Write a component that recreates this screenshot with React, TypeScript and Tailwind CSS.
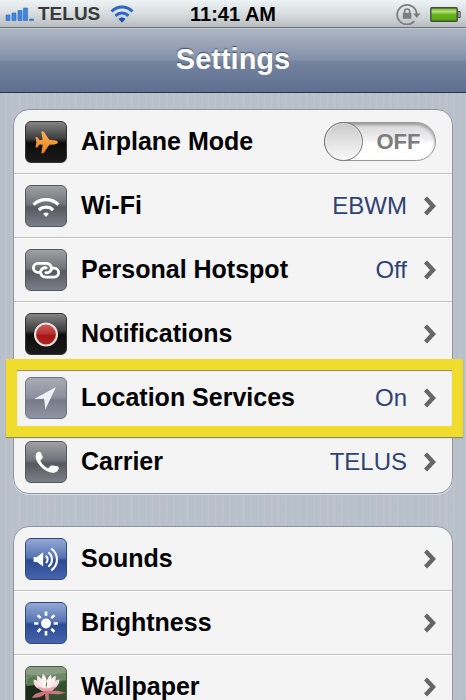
import { useState, type ReactNode } from "react";

const tones = {
  black: "bg-[linear-gradient(#858585_0%,#3c3c3c_42%,#0c0c0c_52%,#1a1a1a_100%)] border-[#333]",
  grey: "bg-[linear-gradient(#a0a1a4_0%,#73757b_44%,#565960_54%,#7b7f88_100%)] border-[#55585f]",
  silver: "bg-[linear-gradient(#a9abb4_0%,#8d909d_48%,#777b8a_56%,#8f93a2_100%)] border-[#70737f]",
  blue: "bg-[linear-gradient(#94a8d4_0%,#5674b4_46%,#2c4b95_54%,#4564ac_100%)] border-[#34477c]",
  photo: "bg-[#45633f] border-[#4d5a4c]",
};

function Plane() {
  return (
    <svg viewBox="0 0 42 42" className="size-full" aria-hidden="true">
      <defs>
        <linearGradient id="plane" x1="0" y1="0" x2="0" y2="1">
          <stop offset="0" stopColor="#f8b15c" />
          <stop offset="1" stopColor="#ee8118" />
        </linearGradient>
      </defs>
      <path
        fill="url(#plane)"
        d="M33.500 21.300c0 1.200-1.500 2-3.600 2.200l-5.400.5-5.700 8.200c-.6.9-2.800.9-2.600-.3l1.300-8-3.300-.3-2 2.600c-.6.8-2.300.8-2.100-.3l.8-4.600-.8-4.600c-.2-1.100 1.500-1.100 2.100-.3l2 2.600 3.300-.3-1.300-8c-.2-1.200 2-1.200 2.600-.3l5.700 8.200 5.400.5c2.100.2 3.600 1 3.600 2.200z"
      />
    </svg>
  );
}

function WifiGlyph() {
  return (
    <svg viewBox="0 0 42 42" className="size-full" fill="none" stroke="#fff" strokeWidth="3.400" aria-hidden="true">
      <path d="M8 19.500c7.200-7 18.800-7 26 0M13.500 25.300c4.300-4 10.700-4 15 0" />
      <path d="M18 29.200c1.700-1.700 4.300-1.700 6 0l-3 3.300z" fill="#fff" stroke="none" />
    </svg>
  );
}

function Links() {
  return (
    <svg viewBox="0 0 42 42" className="size-full" fill="none" stroke="#fff" strokeWidth="3" strokeLinecap="round" aria-hidden="true">
      <path d="M15 23.500h-2.500a4.700 4.700 0 0 1 0-9.500H21c5.500 0 7.500 6 3.800 9-1.200.9-2.600 1-4 .8" />
      <path d="M27 19h2.500a4.700 4.700 0 0 1 0 9.500H21c-5.500 0-7.500-6-3.800-9 1.200-.9 2.600-1 4-.8" />
    </svg>
  );
}

function RedDot() {
  return (
    <svg viewBox="0 0 42 42" className="size-full" aria-hidden="true">
      <defs>
        <linearGradient id="dot" x1="0" y1="0" x2="0" y2="1">
          <stop offset="0" stopColor="#cf5a58" />
          <stop offset=".45" stopColor="#b83433" />
          <stop offset=".55" stopColor="#a31615" />
          <stop offset="1" stopColor="#b02423" />
        </linearGradient>
      </defs>
      <circle cx="21" cy="21.500" r="11.500" fill="url(#dot)" stroke="#e4e0de" strokeWidth="2.200" />
    </svg>
  );
}

function Arrow() {
  return (
    <svg viewBox="0 0 42 42" className="size-full" aria-hidden="true">
      <path d="M31.500 9.500 20.300 33l-1.300-11.300L8.500 22z" fill="#eef1f6" />
    </svg>
  );
}

function Handset() {
  return (
    <svg viewBox="0 0 42 42" className="size-full" aria-hidden="true">
      <path
        fill="#fff"
        d="M12 10.800c1.400-.9 2.900-.9 3.500.2l1.900 4.200c.5 1.300-.2 2.300-1.700 3.300-.8.600-.6 1.500.4 3.100 1.400 2.200 3.200 3.900 5.300 5.100 1.500.9 2.500.9 3.200-.2.800-1.400 2-2.100 3.200-1.700l5 .7c1.600.2 1.900 1.500 1.400 2.900-.9 2.800-3.200 4.200-6.500 4-3.900-.3-8.600-2.700-12.300-6.700-3.500-3.800-5.200-7.700-5.300-10.500 0-1.900.6-3.500 1.900-4.400z"
      />
    </svg>
  );
}

function Speaker() {
  return (
    <svg viewBox="0 0 42 42" className="size-full" fill="none" stroke="#fff" strokeWidth="2.200" aria-hidden="true">
      <path d="M8 18.800h3.500l6.500-4.800v15l-6.500-4.800H8z" fill="#fff" stroke="none" />
      <path d="M20.800 17.800c2.600 2 2.600 5.400 0 7.400M23.500 14c5 3.800 5 11.200 0 15M26.500 10c8 6 8 17 0 23" />
    </svg>
  );
}

function Sun() {
  return (
    <svg viewBox="0 0 42 42" className="size-full" stroke="#fff" strokeWidth="2.800" aria-hidden="true">
      <circle cx="21" cy="21.500" r="5.200" fill="#fff" stroke="none" />
      <path d="M21 9v4.500M21 29.500V34M8.500 21.500H13M29 21.500h4.500M12.200 12.700l3.200 3.200M26.600 27.100l3.200 3.200M29.800 12.700l-3.200 3.200M15.400 27.100l-3.200 3.200" />
    </svg>
  );
}

function Lotus() {
  return (
    <svg viewBox="0 0 42 42" className="size-full" aria-hidden="true">
      <path d="M0 0h42v14L0 18z" fill="#6f8a68" />
      <path d="M0 0h42v6L20 9 0 8z" fill="#8a9c84" />
      <path d="M0 20 14 15l12 10-6 17H0z" fill="#1c2a1a" />
      <path d="M26 22l16-8v28H22z" fill="#34512f" />
      <path d="M2 12c6-3 10-2 14 2l-6 5-9 1z" fill="#587c4d" />
      <g fill="#f6dcdc">
        <path d="M21 24C7 24 8 15 8 13c6 1 11 5 13 11zM21 24c14 0 14-9 14-11-6 1-12 5-14 11z" />
        <path d="M21 24c-9-3-10-10-9-15 5 3 9 9 9 15zM21 24c9-3 11-10 10-15-5 3-10 9-10 15z" fill="#fbeceb" />
        <path d="M21 24c-6-5-5-12-3-17 4 4 5 11 3 17zM21 24c5-5 7-11 5-16-4 4-6 10-5 16z" fill="#fff6f2" />
      </g>
      <path d="M12 20c5 3 14 3 19 0-2 6-5 6-9 6s-8-1-10-6z" fill="#e5a8ae" />
      <path d="M20 25l-10 3-4 4c6 1 11-1 14-4l1 14h3V28l10 1 8-2-9-2z" fill="#c8747f" />
    </svg>
  );
}

function Chevron() {
  return (
    <svg viewBox="0 0 12 20" className="ml-[17px] h-5 w-3 shrink-0" fill="none" stroke="#666" strokeWidth="4.400" aria-hidden="true">
      <path d="M1.500 2 9 10l-7.500 8" />
    </svg>
  );
}

type Item = {
  label: string;
  value?: string;
  tone: keyof typeof tones;
  icon: ReactNode;
  highlighted?: boolean;
};

const network: Item[] = [
  { label: "Wi-Fi", value: "EBWM", tone: "grey", icon: <WifiGlyph /> },
  { label: "Personal Hotspot", value: "Off", tone: "grey", icon: <Links /> },
  { label: "Notifications", tone: "black", icon: <RedDot /> },
  { label: "Location Services", value: "On", tone: "silver", icon: <Arrow />, highlighted: true },
  { label: "Carrier", value: "TELUS", tone: "grey", icon: <Handset /> },
];

const device: Item[] = [
  { label: "Sounds", tone: "blue", icon: <Speaker /> },
  { label: "Brightness", tone: "blue", icon: <Sun /> },
  { label: "Wallpaper", tone: "photo", icon: <Lotus /> },
];

function Tile({ tone, children }: { tone: keyof typeof tones; children: ReactNode }) {
  return (
    <span className={`mr-[14px] block size-[42px] shrink-0 overflow-hidden rounded-md border ${tones[tone]}`}>
      {children}
    </span>
  );
}

function Card({ children }: { children: ReactNode }) {
  return (
    <ul className="mx-[13px] rounded-2xl border border-[#8f959e] bg-[#f4f4f4] shadow-[0_1px_0_#d9dde3]">{children}</ul>
  );
}

const rowLine = "relative border-b border-[#bfbfbf] shadow-[0_1px_0_#fff] last:border-b-0 last:shadow-none";
const rowBody = "flex h-[63px] w-full items-center pr-4 pl-[11px] text-left";

function Row({ item }: { item: Item }) {
  return (
    <li className={rowLine}>
      <button type="button" className={rowBody}>
        <Tile tone={item.tone}>{item.icon}</Tile>
        <span className="flex-1 text-[25px] font-bold">{item.label}</span>
        {item.value && <span className="text-[#2f4273]">{item.value}</span>}
        <Chevron />
      </button>
      {item.highlighted && (
        <span className="pointer-events-none absolute -top-[7px] -right-[11px] -bottom-[8px] -left-[8px] z-10 border-[11px] border-[#f0dc2c] shadow-[0_1px_1px_#8a8a70,inset_0_1px_1px_#8a8a70]" />
      )}
    </li>
  );
}

function AirplaneRow() {
  const [on, setOn] = useState(false);
  return (
    <li className={rowLine}>
      <div className={rowBody}>
        <Tile tone="black">
          <Plane />
        </Tile>
        <label htmlFor="airplane" className="flex-1 text-[25px] font-bold">
          Airplane Mode
        </label>
        <span
          className={`flex h-[39px] w-28 items-center rounded-full border border-[#999] bg-[linear-gradient(#d6d6d6,#f0f0f0_45%,#fff_55%,#fff)] shadow-[inset_0_2px_3px_#999] ${on ? "flex-row-reverse" : ""}`}
        >
          <input
            id="airplane"
            type="checkbox"
            role="switch"
            checked={on}
            onChange={() => setOn(!on)}
            className="-m-px size-[39px] shrink-0 appearance-none rounded-full border border-[#777] bg-[linear-gradient(#c9c9c9,#fafafa)] shadow-[inset_0_0_2px_#fff]"
          />
          <span className="flex-1 text-center text-[22px] font-bold text-[#7c7c7c]">{on ? "ON" : "OFF"}</span>
        </span>
      </div>
    </li>
  );
}

function StatusBar() {
  return (
    <div className="grid h-7 shrink-0 grid-cols-[1fr_auto_1fr] items-center border-b border-[#6d7178] bg-[linear-gradient(#eef3f5,#d8dddf_50%,#b9bdbf)] px-[5px] text-xl font-bold">
      <div className="flex items-center text-[19px] text-[#3a3a3a]">
        <svg viewBox="0 0 29 14" className="mr-1 h-[14px] w-[29px]" fill="#3f86dd" stroke="#2a68be" strokeWidth=".6" aria-hidden="true">
          <path d="M1 8h4v5.500H1zM7 6h4v7.500H7zM13 3.500h4v10h-4zM18.500 1h4v12.500h-4zM24.500 12h4v1.500h-4z" />
        </svg>
        <span>TELUS</span>
        <svg viewBox="0 0 24 18" className="ml-[10px] h-[18px] w-6" fill="none" stroke="#2c66c6" strokeWidth="3" aria-hidden="true">
          <path d="M1.500 6.500c6-6 15-6 21 0M5.500 10.800c3.800-3.600 9.200-3.600 13 0" />
          <path d="M8.500 14c2-2 5-2 7 0L12 17.800z" fill="#1c52b8" stroke="none" />
        </svg>
      </div>
      <time className="text-black">11:41 AM</time>
      <div className="flex items-center justify-end">
        <svg viewBox="0 0 25 22" className="mr-[9px] h-[22px] w-[25px]" fill="none" stroke="#7c7f82" strokeWidth="1.800" aria-hidden="true">
          <path d="M18.300 18.200A9.800 9.800 0 1 1 20.800 11.500" />
          <path d="M17 10.500h7.500l-3.700 4.500z" fill="#7c7f82" stroke="none" />
          <path d="M6.800 9.800h8.600v6H6.800z" fill="#7c7f82" stroke="none" />
          <path d="M8.500 10V8.500c0-3.300 5.200-3.300 5.200 0V10" strokeWidth="1.600" />
        </svg>
        <svg viewBox="0 0 31 15" className="h-[15px] w-[31px]" aria-hidden="true">
          <defs>
            <linearGradient id="charge" x1="0" y1="0" x2="0" y2="1">
              <stop offset="0" stopColor="#6fae2c" />
              <stop offset=".3" stopColor="#b6e07a" />
              <stop offset=".5" stopColor="#66b41c" />
              <stop offset="1" stopColor="#5aa510" />
            </linearGradient>
          </defs>
          <rect x=".8" y=".8" width="26.400" height="13.400" rx="1" fill="url(#charge)" stroke="#42503a" strokeWidth="1.400" />
          <path d="M28 4.500h2.200v6H28z" fill="#b5b9bb" stroke="#555" />
        </svg>
      </div>
    </div>
  );
}

export default function App() {
  return (
    <div className="flex h-screen flex-col overflow-hidden bg-[repeating-linear-gradient(90deg,#b7bfca_0px,#b9c1cb_5px,#c0c6cd_6px,#b7bfca_7px)] font-['Liberation_Sans',Arial,sans-serif] text-2xl">
      <StatusBar />
      <header className="flex h-[65px] shrink-0 items-center justify-center border-t border-b border-t-[#c4cad4] border-b-[#2c3848] bg-[linear-gradient(#acb6c5,#8391a9_48%,#74839f_52%,#5e7090)] pb-[2px]">
        <h1 className="text-[29px] font-bold text-white [text-shadow:0_-1px_1px_#3f4b60]">Settings</h1>
      </header>
      <main className="flex flex-col gap-8 pt-4">
        <Card>
          <AirplaneRow />
          {network.map((item) => (
            <Row key={item.label} item={item} />
          ))}
        </Card>
        <Card>
          {device.map((item) => (
            <Row key={item.label} item={item} />
          ))}
        </Card>
      </main>
    </div>
  );
}
